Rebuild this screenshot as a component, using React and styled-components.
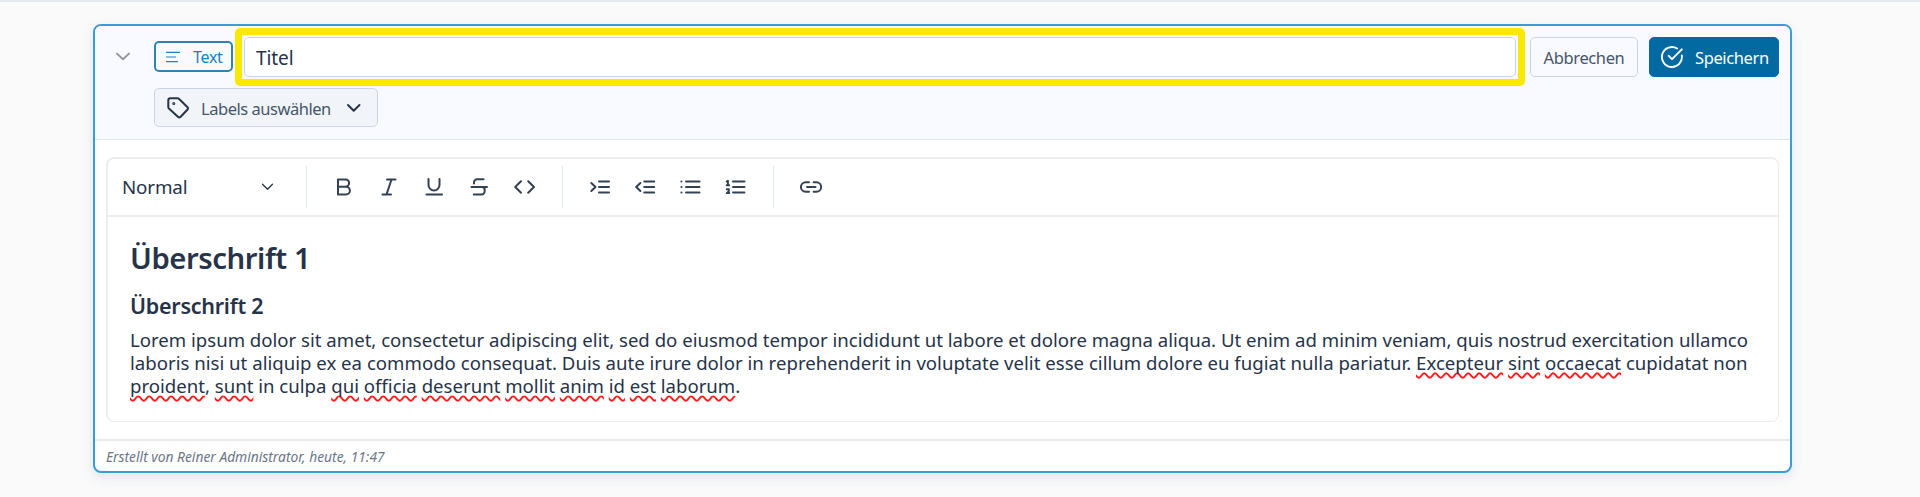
import styled, { createGlobalStyle } from 'styled-components'
import { useState } from 'react'

const GlobalStyle = createGlobalStyle`
    * {
        box-sizing: border-box;
    }
    body {
        margin: 0;
        background: #fafafa;
        color: #263348;
        font-family: 'Noto Sans', 'Open Sans', sans-serif;
    }
    button, input {
        font-family: inherit;
        margin: 0;
    }
`

const Page = styled.main`
    height: 497px;
    overflow: hidden;
    border-top: 2px solid #e5e9ef;
    padding: 22px 128px 0 93px;
`

const Card = styled.section`
    display: flex;
    flex-direction: column;
    height: 449px;
    border: 2px solid #3a9dd4;
    border-radius: 8px;
    overflow: hidden;
    background: white;
    box-shadow: 0 4px 12px rgba(30, 80, 150, .12);
`

const Header = styled.header`
    display: flex;
    align-items: flex-start;
    height: 114px;
    padding: 2px 11px 0 20px;
    background: #f8faff;
    border-bottom: 1px solid #dfe5ec;
`

const Toggle = styled.button`
    display: flex;
    padding: 0;
    margin: 20px 23px 0 0;
    border: 0;
    background: none;
    color: #94979f;
`

const HeaderMain = styled.div`
    flex: 1;
    display: flex;
    flex-direction: column;
    align-items: flex-start;
`

const TitleRow = styled.div`
    display: flex;
    align-items: center;
    align-self: stretch;
    height: 58px;
`

const TypeBadge = styled.span`
    display: flex;
    align-items: center;
    gap: 12px;
    width: 79px;
    height: 31px;
    margin: 0 2px 1px 0;
    padding-left: 9px;
    border: 2px solid #2f83b3;
    border-radius: 5px;
    color: #1c80bb;
    font-size: 16px;
    letter-spacing: -.3px;
`

const Highlight = styled.div`
    flex: 1;
    display: flex;
    height: 58px;
    padding: 2px;
    border: 7px solid #fae800;
    border-radius: 5px;
    background: #f8faff;
`

const TitleInput = styled.input`
    flex: 1;
    min-width: 0;
    padding: 2px 11px 0;
    border: 1px solid #cbd5e1;
    border-radius: 5px;
    outline: 0;
    background: white;
    color: #263348;
    font-size: 19px;
    letter-spacing: -.1px;
`

const Button = styled.button`
    display: flex;
    align-items: center;
    justify-content: ${({ $primary }) => $primary ? 'flex-start' : 'center'};
    gap: 11px;
    width: ${({ $primary }) => $primary ? '130px' : '108px'};
    height: 40px;
    margin-left: ${({ $primary }) => $primary ? '11px' : '5px'};
    padding: ${({ $primary }) => $primary ? '0 0 0 10px' : '0'};
    border: 1px solid ${({ $primary }) => $primary ? '#0369a1' : '#cbd5e1'};
    border-radius: 5px;
    background: ${({ $primary }) => $primary ? '#0369a1' : '#f8faff'};
    color: ${({ $primary }) => $primary ? 'white' : '#475569'};
    font-size: 16.5px;
    letter-spacing: -.38px;
`

const LabelSelect = styled.button`
    display: flex;
    align-items: center;
    width: 224px;
    height: 39px;
    margin-top: 2px;
    padding: 0 0 0 11px;
    border: 1px solid #cbd5e1;
    border-radius: 5px;
    background: #f1f5f9;
    color: #263348;
    font-size: 16.5px;
    letter-spacing: -.47px;
    span {
        width: 129px;
        margin: 2px 11px 0;
        color: #475569;
        white-space: nowrap;
    }
`

const Editor = styled.div`
    height: 265px;
    margin: 17px 11px 0;
    border: solid #ebedef;
    border-width: 2px 1px 1px 2px;
    border-radius: 8px;
`

const Toolbar = styled.div`
    display: flex;
    align-items: center;
    height: 58px;
    border-bottom: 2px solid #e8edf2;
`

const StyleSelect = styled.div`
    display: flex;
    align-items: center;
    justify-content: space-between;
    width: 198px;
    padding: 0 30px 0 14px;
    font-size: 18.8px;
    letter-spacing: -.15px;
`

const ToolGroup = styled.div`
    display: flex;
    height: 42px;
    padding: 0 16px 0 14px;
    border-left: 1px solid #dfe5ec;
`

const Tool = styled.button`
    display: flex;
    align-items: center;
    justify-content: center;
    width: 45px;
    padding: 0;
    border: 0;
    background: none;
    color: #334155;
    cursor: pointer;
`

const Content = styled.div`
    padding: 19px 22px 0;
    white-space: nowrap;
    h1, h2, p {
        margin: 0;
        font-weight: 400;
    }
    h1 {
        font-size: 29.3px;
        font-weight: 600;
        line-height: 44px;
        letter-spacing: -.45px;
    }
    h2 {
        margin-top: 10px;
        font-size: 21.5px;
        font-weight: 600;
        line-height: 32px;
        letter-spacing: -.25px;
    }
    p {
        margin-top: 5.6px;
        font-size: 18.6px;
        line-height: 23.4px;
    }
`

const Line = styled.span`
    display: block;
    letter-spacing: ${({ $spacing }) => $spacing}px;
`

const Misspelled = styled.span`
    text-decoration: underline wavy #ff1a1a 1.5px;
    text-decoration-skip-ink: none;
    text-underline-offset: 2px;
`

const Footer = styled.footer`
    margin-top: 17px;
    padding: 6px 11px 0;
    border-top: 2px solid #e8eaed;
    color: #6b7686;
    font-size: 13.8px;
    font-style: italic;
    line-height: 20px;
`

function Icon({ size = 24, width = 2, box = 24, children }) {
    return (
        <svg
            width={size}
            height={size}
            viewBox={`0 0 ${box} ${box}`}
            fill='none'
            stroke='currentColor'
            strokeWidth={width}
            strokeLinecap='round'
            strokeLinejoin='round'
        >
            {children}
        </svg>
    )
}

const toolGroups = [
    [
        { name: 'Fett', path: 'M6 4.5h7.5a3.6 3.6 0 0 1 0 7.2H6zM6 11.7h8a3.9 3.9 0 0 1 0 7.8H6z' },
        { name: 'Kursiv', path: 'M10 4.5h8.5M5.5 19.5H14M14.5 4.5l-5 15' },
        { name: 'Unterstrichen', path: 'M6.5 4v6a5.5 5.5 0 0 0 11 0V4M4.5 19.5h15.5' },
        { name: 'Durchgestrichen', path: 'M16.5 4.2h-6.3A3.2 3.2 0 0 0 7 7.4v1.2M4.5 12h15.5M15.5 12a2.8 2.8 0 0 1 2.2 3v1.3a3.2 3.2 0 0 1-3.2 3.2H6.8' },
        { name: 'Code', path: 'M9 6.2 3.2 12 9 17.8M16.2 6.2l5.8 5.8-5.8 5.8' },
    ],
    [
        { name: 'Einzug vergrößern', path: 'M3.3 8l4.2 4-4.2 4M11 6.6h10M11 12.1h10M11 17.6h10' },
        { name: 'Einzug verkleinern', path: 'M7.4 8l-4.2 4 4.2 4M11.2 6.6h10M11.2 12.1h10M11.2 17.6h10' },
        { name: 'Liste', path: 'M3.4 6.6h.1M3.4 12.1h.1M3.4 17.6h.1M8 6.6h13.5M8 12.1h13.5M8 17.6h13.5' },
        { name: 'Nummerierte Liste', path: 'M10 6.6h11.5M10 12.1h11.5M10 17.6h11.5M3.7 6.4l1.2-.5v4.2M3.7 10.2h2.4M3.8 14.3h2v1.8l-2 2h2.5' },
    ],
    [
        { name: 'Link', path: 'M10 7.2H6.7a4.8 4.8 0 0 0 0 9.6H10M14.6 7.2h2.8a4.8 4.8 0 0 1 0 9.6h-2.8M8 12h8.5' },
    ],
]

function EditorToolbar() {
    return (
        <Toolbar>
            <StyleSelect>
                Normal
                <Icon size={16} box={16} width={1.3}><path d='M2.5 5.3l5 5 5-5' /></Icon>
            </StyleSelect>
            {toolGroups.map((tools, i) => (
                <ToolGroup key={i}>
                    {tools.map(({ name, path }) => (
                        <Tool key={name} aria-label={name}>
                            <Icon><path d={path} /></Icon>
                        </Tool>
                    ))}
                </ToolGroup>
            ))}
        </Toolbar>
    )
}

function Words({ text }) {
    return text.split(' ').map((word, i) => {
        const end = word.match(/[.,]$/)?.[0] ?? ''
        return (
            <span key={i}>
                {i > 0 && ' '}
                <Misspelled>{end ? word.slice(0, -1) : word}</Misspelled>
                {end}
            </span>
        )
    })
}

function App() {
    const [ title, setTitle ] = useState('Titel')

    return (
        <>
            <GlobalStyle />
            <Page>
                <Card>
                    <Header>
                        <Toggle aria-label='Einklappen'>
                            <Icon size={16} box={16}><path d='M2 5.6l6 5.7 6-5.7' /></Icon>
                        </Toggle>
                        <HeaderMain>
                            <TitleRow>
                                <TypeBadge>
                                    <Icon size={16} box={16} width={1.2}>
                                        <path d='M1.5 3.3h13M1.5 8h9M1.5 12.7h11' />
                                    </Icon>
                                    Text
                                </TypeBadge>
                                <Highlight>
                                    <TitleInput value={title} onChange={e => setTitle(e.target.value)} />
                                </Highlight>
                                <Button>Abbrechen</Button>
                                <Button $primary>
                                    <Icon width={1.9}>
                                        <path d='M21.8 10.5A10 10 0 1 1 17.2 3.5M8.7 10.8l3.3 3.3L21.8 4.3' />
                                    </Icon>
                                    Speichern
                                </Button>
                            </TitleRow>
                            <LabelSelect>
                                <Icon>
                                    <path d='M2.3 4.2a2 2 0 0 1 2-2h7.2a2 2 0 0 1 1.4.6l8.4 8.2a2 2 0 0 1 0 2.8l-6.6 7a2 2 0 0 1-2.8 0l-9-8.3a2 2 0 0 1-.6-1.4z' />
                                    <circle cx='7.8' cy='7.6' r='.5' fill='currentColor' />
                                </Icon>
                                <span>Labels auswählen</span>
                                <Icon><path d='M7 9l5.7 5.7L18.5 9' /></Icon>
                            </LabelSelect>
                        </HeaderMain>
                    </Header>
                    <Editor>
                        <EditorToolbar />
                        <Content>
                            <h1>Überschrift 1</h1>
                            <h2>Überschrift 2</h2>
                            <p>
                                <Line $spacing={0}>
                                    Lorem ipsum dolor sit amet, consectetur adipiscing elit, sed do eiusmod tempor incididunt ut labore et dolore magna aliqua. Ut enim ad minim veniam, quis nostrud exercitation ullamco
                                </Line>
                                <Line $spacing={.012}>
                                    laboris nisi ut aliquip ex ea commodo consequat. Duis aute irure dolor in reprehenderit in voluptate velit esse cillum dolore eu fugiat nulla pariatur.{' '}
                                    <Words text='Excepteur sint occaecat' /> cupidatat non
                                </Line>
                                <Line $spacing={0}>
                                    <Words text='proident, sunt' /> in culpa <Words text='qui officia deserunt mollit anim id est laborum.' />
                                </Line>
                            </p>
                        </Content>
                    </Editor>
                    <Footer>Erstellt von Reiner Administrator, heute, 11:47</Footer>
                </Card>
            </Page>
        </>
    )
}

export default App
